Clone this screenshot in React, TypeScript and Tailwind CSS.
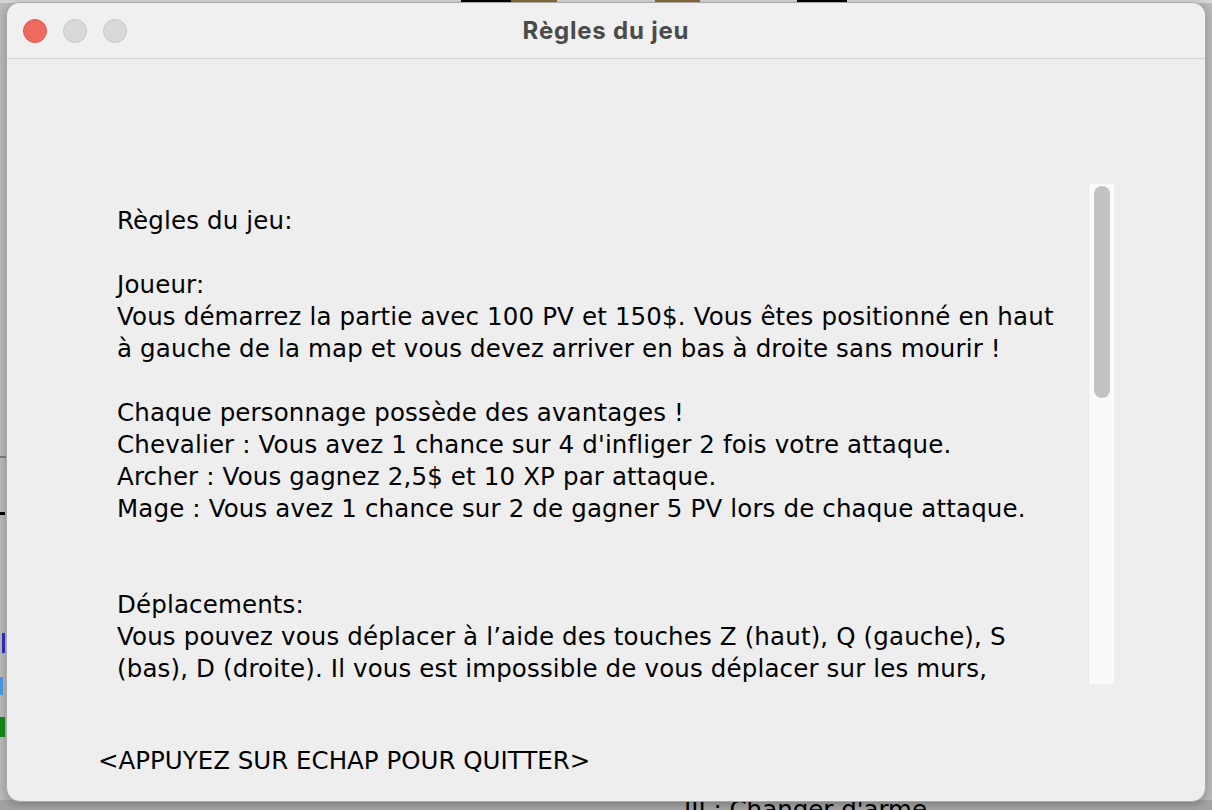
import React from 'react';

const lines: string[] = [
  'Règles du jeu:',
  '',
  'Joueur:',
  'Vous démarrez la partie avec 100 PV et 150$. Vous êtes positionné en haut',
  'à gauche de la map et vous devez arriver en bas à droite sans mourir !',
  '',
  'Chaque personnage possède des avantages !',
  "Chevalier : Vous avez 1 chance sur 4 d'infliger 2 fois votre attaque.",
  'Archer : Vous gagnez 2,5$ et 10 XP par attaque.',
  'Mage : Vous avez 1 chance sur 2 de gagner 5 PV lors de chaque attaque.',
  '',
  '',
  'Déplacements:',
  'Vous pouvez vous déplacer à l’aide des touches Z (haut), Q (gauche), S',
  '(bas), D (droite). Il vous est impossible de vous déplacer sur les murs,',
];

const bodyFont = { fontFamily: '"DejaVu Sans", "Noto Sans", sans-serif' };

const TrafficLights = () => (
  <div className="flex items-center gap-4 pl-4">
    <span className="block h-6 w-6 rounded-full border border-[#d95a4e] bg-[#ee6a5f]" />
    <span className="block h-6 w-6 rounded-full border border-[#c5c5c5] bg-[#d9d9d9]" />
    <span className="block h-6 w-6 rounded-full border border-[#c5c5c5] bg-[#d9d9d9]" />
  </div>
);

const ScrollPane = () => (
  <div className="flex h-[500px] w-[1016px]">
    <div className="flex-1 overflow-hidden pl-[19px] pt-[21px] text-[24.5px] leading-[32px] tracking-[0.15px] text-black" style={bodyFont}>
      {lines.map((line, i) => (
        <div key={i} className="h-8 whitespace-pre">
          {line}
        </div>
      ))}
    </div>
    <div className="w-[26px] border-l border-[#e9e9e9] bg-[#fafafa] pl-[5px] pt-[2px]">
      <div className="h-[212px] w-4 rounded-full bg-[#c2c2c2]" />
    </div>
  </div>
);

export default function App() {
  return (
    <div className="relative h-[810px] w-[1212px] overflow-hidden bg-[#b9b9b9]">
      {/* desktop behind the window */}
      <div className="absolute left-0 top-0 flex h-[3px] w-full bg-[#d6d6d6]">
        <div className="ml-[461px] h-full w-[50px] bg-black" />
        <div className="h-full w-[46px] bg-[#8a6a3a]" />
        <div className="ml-[98px] h-full w-[45px] bg-[#8a6a3a]" />
        <div className="ml-[97px] h-full w-[50px] bg-black" />
      </div>
      <div className="absolute left-0 top-[456px] h-[2px] w-[6px] bg-[#7c7c7c]" />
      <div className="absolute left-0 top-[512px] h-[3px] w-[5px] bg-black" />
      <div className="absolute left-[2px] top-[633px] h-[20px] w-[3px] bg-[#2e2ec4]" />
      <div className="absolute left-0 top-[677px] h-[18px] w-[3px] bg-[#4b9ae6]" />
      <div className="absolute left-0 top-[717px] h-[20px] w-[5px] bg-[#138a1a]" />
      <div className="absolute bottom-0 left-0 h-[10px] w-full bg-[#a2a2a2]" />
      <div className="absolute left-[684px] top-[794px] text-[24.5px] leading-[32px] text-black" style={bodyFont}>
        III : Changer d'arme
      </div>

      {/* window */}
      <div className="absolute left-[6px] top-[2px] flex h-[800px] w-[1200px] flex-col overflow-hidden rounded-[14px] border border-[#a9a9a9] bg-[#eeeeee] shadow-[0_2px_8px_rgba(0,0,0,0.25)]">
        <div className="relative flex h-14 shrink-0 items-center border-b border-[#d3d3d3] bg-[#f0f0f0]">
          <TrafficLights />
          <div
            className="absolute inset-0 flex items-center justify-center text-[24px] font-bold tracking-[0.8px] text-[#4b4b4b]"
            style={{ fontFamily: 'Inter, "Liberation Sans", sans-serif' }}
          >
            Règles du jeu
          </div>
        </div>
        <div className="flex flex-col pl-[91px] pt-[125px]">
          <ScrollPane />
          <div className="mt-[61px] text-[24.5px] leading-[32px] text-black" style={bodyFont}>
            &lt;APPUYEZ SUR ECHAP POUR QUITTER&gt;
          </div>
        </div>
      </div>
    </div>
  );
}
